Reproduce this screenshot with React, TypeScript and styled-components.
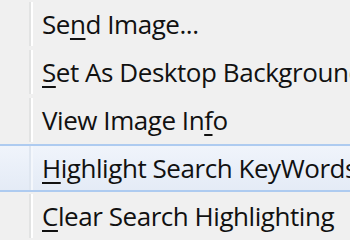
import styled, { createGlobalStyle } from "styled-components";

const GlobalStyle = createGlobalStyle`
  html, body {
    margin: 0;
    padding: 0;
    background: #f0f0f0;
    overflow: hidden;
  }
`;

const Menu = styled.div`
  width: 350px;
  height: 240px;
  overflow: hidden;
  background: #f0f0f0;
  display: flex;
  flex-direction: column;
  font-family: "Open Sans", "Noto Sans", sans-serif;
  font-size: 26px;
  letter-spacing: -0.45px;
  color: #111;
`;

const Item = styled.div<{ $active?: boolean }>`
  display: flex;
  align-items: center;
  height: 48px;
  flex-shrink: 0;
  box-sizing: border-box;
  white-space: nowrap;
  margin: ${(p) => (p.$active ? "0 -4px" : "0")};
  padding-left: ${(p) => (p.$active ? "4px" : "0")};
  border-top: 2px solid ${(p) => (p.$active ? "#aecbf0" : "transparent")};
  border-bottom: 2px solid ${(p) => (p.$active ? "#aecbf0" : "transparent")};
  background: ${(p) =>
    p.$active ? "linear-gradient(#f0f4fb, #e4ebf6)" : "transparent"};
`;

const Gutter = styled.div<{ $active?: boolean }>`
  width: 29px;
  height: 100%;
  flex-shrink: 0;
  border-right: 2px solid ${(p) => (p.$active ? "#dfe6f0" : "#e2e3e3")};
  box-shadow: 2px 0 0 ${(p) => (p.$active ? "#f4f7fc" : "#ffffff")};
`;

const Label = styled.span`
  padding-left: 11px;
`;

const Key = styled.span`
  text-decoration: underline;
  text-decoration-thickness: 2px;
  text-underline-offset: 4px;
`;

const items: { pre: string; key: string; post: string; active?: boolean }[] = [
  { pre: "Se", key: "n", post: "d Image..." },
  { pre: "", key: "S", post: "et As Desktop Background..." },
  { pre: "View Image In", key: "f", post: "o" },
  { pre: "", key: "H", post: "ighlight Search KeyWords", active: true },
  { pre: "", key: "C", post: "lear Search Highlighting" },
];

export default function App() {
  return (
    <>
      <GlobalStyle />
      <Menu>
        {items.map((it) => (
          <Item key={it.pre + it.key + it.post} $active={it.active}>
            <Gutter $active={it.active} />
            <Label>
              {it.pre}
              <Key>{it.key}</Key>
              {it.post}
            </Label>
          </Item>
        ))}
      </Menu>
    </>
  );
}
